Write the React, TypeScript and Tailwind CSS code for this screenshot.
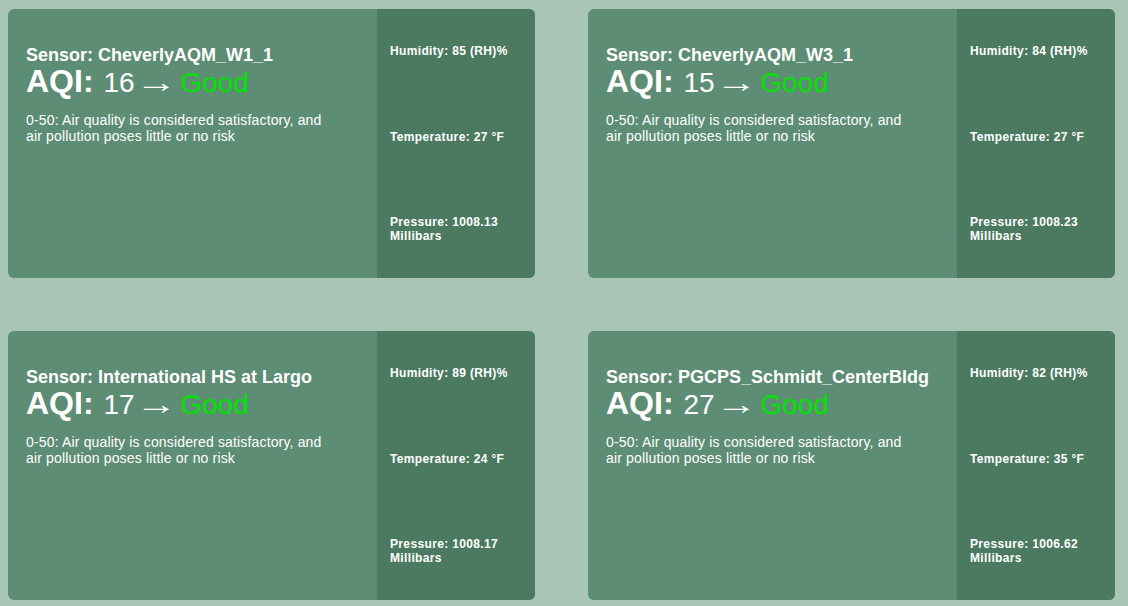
const SENSORS = [
  { name: 'CheverlyAQM_W1_1', aqi: 16, humidity: 85, temp: 27, pressure: '1008.13' },
  { name: 'CheverlyAQM_W3_1', aqi: 15, humidity: 84, temp: 27, pressure: '1008.23' },
  { name: 'International HS at Largo', aqi: 17, humidity: 89, temp: 24, pressure: '1008.17' },
  { name: 'PGCPS_Schmidt_CenterBldg', aqi: 27, humidity: 82, temp: 35, pressure: '1006.62' },
];

type Sensor = (typeof SENSORS)[number];

export default function App() {
  return (
    <div className="min-h-screen w-full bg-[#a9c5b5] font-['Liberation_Sans',Arial,sans-serif]">
      <div className="grid grid-cols-[527px_527px] gap-x-[53px] gap-y-[53px] pl-[8px] pt-[9px]">
        {SENSORS.map((s) => (
          <SensorCard key={s.name} sensor={s} />
        ))}
      </div>
    </div>
  );
}

function SensorCard({ sensor }: { sensor: Sensor }) {
  return (
    <div className="flex h-[269px] overflow-hidden rounded-[6px] bg-[#5e8d75] text-white">
      {/* main reading */}
      <div className="flex-1 pl-[18px] pt-[36px]">
        <div className="text-[18px] font-bold leading-[21px]">Sensor: {sensor.name}</div>
        <div className="flex h-[30px] items-baseline leading-[30px]">
          <span className="text-[32px] font-bold">AQI:</span>
          <span className="ml-[10px] text-[28px]">
            {sensor.aqi}
            <span className="mr-[10px] inline-block origin-left scale-x-[1.5]">→</span>{' '}
            <span className="text-[#00e400]">Good</span>
          </span>
        </div>
        <p className="mt-[16px] w-[310px] text-[14px] leading-[16px] tracking-[0.16px]">
          0-50: Air quality is considered satisfactory, and air pollution poses little or no risk
        </p>
      </div>

      {/* side stats */}
      <div className="flex w-[158px] flex-col gap-[71.5px] bg-[#4b7a61] pl-[13px] pr-[8px] pt-[35px] text-[12px] font-bold leading-[14px] tracking-[0.35px]">
        <div>Humidity: {sensor.humidity} (RH)%</div>
        <div>Temperature: {sensor.temp} °F</div>
        <div>
          Pressure: {sensor.pressure}
          <br />
          Millibars
        </div>
      </div>
    </div>
  );
}
